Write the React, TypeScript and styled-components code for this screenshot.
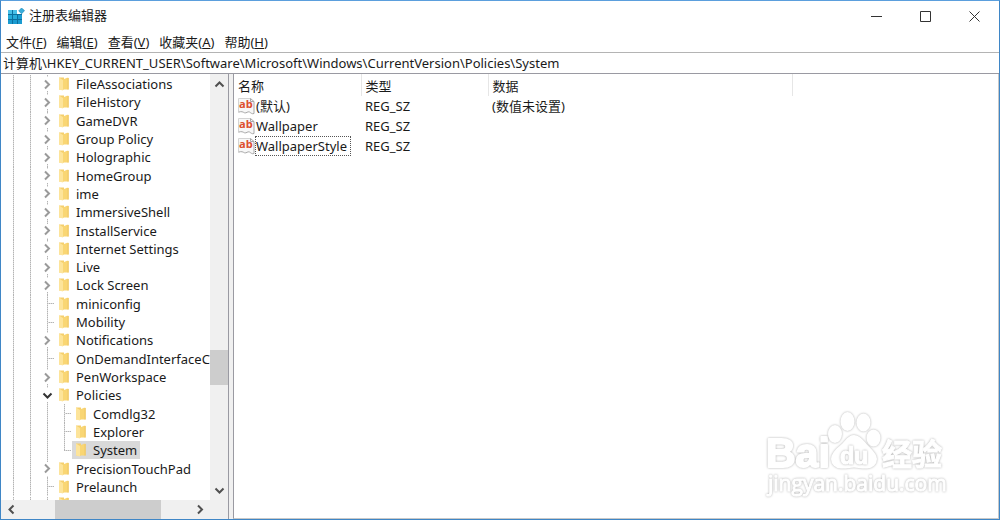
import React from "react";
import styled, { createGlobalStyle, css } from "styled-components";

const GlobalStyle = createGlobalStyle`
  * { box-sizing: border-box; }
  html, body { margin: 0; background: #fff; }
  body, button, input, table {
    font-family: "Noto Sans", "Noto Sans CJK SC", sans-serif;
    font-size: 13px;
    color: #1a1a1a;
  }
  button {
    border: 0;
    padding: 0;
    background: none;
    line-height: inherit;
  }
`;

const Window = styled.div`
  position: relative;
  display: flex;
  flex-direction: column;
  height: 100vh;
  min-height: 320px;
  overflow: hidden;
  background: #fff;
  border: 1px solid #3f86c6;
  border-top-color: #5b9fdd;
`;

const TitleBar = styled.header`
  display: flex;
  align-items: center;
  height: 30px;
  flex: none;
  padding-left: 7px;
`;

const Title = styled.h1`
  margin: 0 auto 0 4px;
  font-size: 13px;
  font-weight: 400;
  line-height: 20px;
  padding-bottom: 2px;
`;

const CaptionButton = styled.button`
  display: grid;
  place-items: center;
  width: 49px;
  height: 30px;
`;

const MenuBar = styled.nav`
  display: flex;
  gap: 10px;
  flex: none;
  height: 21px;
  padding: 1px 0 0 5px;
  line-height: 20px;
`;

const MenuButton = styled.button`
  white-space: nowrap;
`;

const AddressInput = styled.input`
  flex: none;
  width: 100%;
  height: 22px;
  padding: 0 2px 2px;
  border: solid #9a9aa2;
  border-width: 1px 0;
  border-top-color: #b4b4b4;
  border-radius: 0;
  background: #fff;
  outline: 0;
`;

const Panes = styled.main`
  display: grid;
  grid-template-columns: 228px 4px minmax(0, 1fr);
  flex: 1;
  min-height: 0;
  background: #f0f0f0;
`;

const TreePane = styled.section`
  display: grid;
  grid-template-columns: minmax(0, 1fr) 18px;
  grid-template-rows: minmax(0, 1fr) 19px;
  border-right: 1px solid #9a9aa2;
  min-height: 0;
`;

const Tree = styled.ul`
  display: grid;
  grid-template-rows: repeat(23, minmax(0, 1fr)) 4px;
  min-height: 0;
  margin: 0;
  padding: 1px 0 0 3px;
  overflow: hidden;
  list-style: none;
  background: #fff;
`;

const TreeRow = styled.li`
  display: flex;
  min-width: 0;
  min-height: 0;
  line-height: 18px;
`;

const PartialRow = styled(TreeRow)`
  overflow: hidden;
  padding-top: 1px;
`;

const dots = (direction: string) =>
  `repeating-linear-gradient(${direction}, #b4b4b4 0 1px, #dcdcdc 1px 2px)`;

const Guide = styled.span<{ $kind?: "line" | "branch" | "end" }>`
  display: flex;
  align-items: center;
  justify-content: center;
  flex: none;
  width: 17px;
  padding-left: 2px;
  background-repeat: no-repeat;
  background-image: ${dots("to bottom")};
  background-position: 9px 0;
  background-size: 1px 100%;
  ${(p) =>
    (p.$kind === "branch" || p.$kind === "end") &&
    css`
      background-image: ${dots("to bottom")}, ${dots("to right")};
      background-position: 9px 0, 9px 50%;
      background-size: 1px ${p.$kind === "end" ? "50%" : "100%"}, 7px 1px;
    `}
`;

const Expander = styled.button`
  display: grid;
  place-items: center;
  width: 11px;
  height: 14px;
  background: #fff;
`;

const TreeLabel = styled.button<{ $selected?: boolean }>`
  display: flex;
  align-items: center;
  gap: 7px;
  flex: none;
  padding: 0 3px 0 4px;
  white-space: nowrap;
  background: ${(p) => (p.$selected ? "#d9d9d9" : "transparent")};
`;

const FolderClip = styled.span`
  flex: none;
  padding-left: 4px;
  line-height: 0;
`;

const ScrollBar = styled.div<{ $vertical?: boolean }>`
  display: flex;
  flex-direction: ${(p) => (p.$vertical ? "column" : "row")};
  background: #f0f0f0;
  min-width: 0;
  min-height: 0;
`;

const ScrollButton = styled.button`
  display: grid;
  place-items: center;
  flex: 0 0 20px;
`;

const TrackGap = styled.span<{ $size: number }>`
  flex: ${(p) => p.$size} 1 0;
`;

const Thumb = styled(TrackGap)`
  background: #cdcdcd;
`;

const ValuePane = styled.section`
  background: #fff;
  border-left: 1px solid #9a9aa2;
  border-bottom: 1px solid #c8c8c8;
  border-right: 1px solid #c8c8c8;
  min-width: 0;
`;

const ValueTable = styled.table`
  width: 100%;
  table-layout: fixed;
  border-collapse: collapse;
  line-height: 18px;
`;

const Col = styled.col<{ $width?: number }>`
  width: ${(p) => (p.$width ? `${p.$width}px` : "auto")};
`;

const HeadCell = styled.th`
  height: 22px;
  padding: 2px 4px 0;
  font-weight: 400;
  text-align: left;
  border-right: 1px solid #e6e6e6;
  &:last-child { border-right: 0; }
`;

const Cell = styled.td`
  height: 20px;
  padding: 0 4px;
  white-space: nowrap;
`;

const ValueName = styled.button<{ $focused?: boolean }>`
  display: flex;
  align-items: center;
  height: 20px;
  span {
    padding: 0 3px 0 0;
    border: 1px ${(p) => (p.$focused ? "dotted #555" : "solid transparent")};
  }
`;

const Watermark = styled.svg`
  position: absolute;
  right: 48px;
  bottom: 18px;
  width: 188px;
  height: 94px;
  text, ellipse, path {
    filter: drop-shadow(0 0 1px #b0b0b0);
  }
`;

const AppIcon = () => (
  <svg width="17" height="17" viewBox="0 0 17 17" aria-hidden="true">
    <path d="M0 2h9v4h5v10H0z" fill="#1b9bd0" />
    <path d="M0 2h4v4H0zM5 2h4v4H5z" fill="#48bfe8" />
    <path d="M0 7h4v4H0zM5 7h4v4H5z" fill="#27abd9" />
    <path d="M4.500 2v14M9.500 6v10M0 6.500h14M0 11.500h14" stroke="#0b6f9f" strokeWidth="1" />
    <path d="M13.500 0l3 2.600-2.800 3.200-3-2.800z" fill="#3aaedb" stroke="#0c82b5" strokeWidth=".6" />
  </svg>
);

const Folder = () => (
  <svg width="10" height="14" viewBox="0 0 10 14" aria-hidden="true">
    <path d="M0 .5h5v12H0z" fill="#f5cf6c" />
    <path d="M0 .5l4 2.500V13.500L0 12.500z" fill="#fde49a" />
    <path d="M4 2.500L8 .8h1.500v11.700H4z" fill="#f9d674" />
    <path d="M8.500 1h1.200v11.500H8.500z" fill="#efc866" />
  </svg>
);

const Chevron = ({ dir, color }: { dir: "up" | "down" | "left" | "right"; color: string }) => {
  const paths = {
    up: "M1.5 7.5L5.5 3.500l4 4",
    down: "M1.5 3.500l4 4 4-4",
    left: "M7.5 1.5l-4 4 4 4",
    right: "M3 1.500l4 4-4 4",
  };
  return (
    <svg width="11" height="11" viewBox="0 0 11 11" aria-hidden="true">
      <path d={paths[dir]} fill="none" stroke={color} strokeWidth="2" />
    </svg>
  );
};

const StringIcon = () => (
  <svg width="17" height="18" viewBox="0 0 17 18" aria-hidden="true">
    <path
      d="M.5 1.500h12l3.500 3v12c-2 .8-3-.6-4.500-1.500-2-1-3 1.600-5 .8-1.500-.8-3-1.800-6-.6z"
      fill="#f7f7f7"
    />
    <path d="M.5 15.200V1.500h12" fill="none" stroke="#d4d4d4" />
    <path
      d="M12.500 1.500l3.500 3v12c-2 .8-3-.6-4.500-1.500-2-1-3 1.600-5 .8-1.500-.8-3-1.800-6-.6M12.500 1.500v3H16"
      fill="none"
      stroke="#a8a8a8"
    />
    <text x="1" y="11" fontFamily="Open Sans, sans-serif" fontSize="11" fontWeight="700" fill="#dd4f2e">
      ab
    </text>
  </svg>
);

type Node = { name: string; kind: "closed" | "open" | "leaf" | "child" | "lastChild" };

const nodes: Node[] = [
  ...[
    "FileAssociations", "FileHistory", "GameDVR", "Group Policy", "Holographic", "HomeGroup",
    "ime", "ImmersiveShell", "InstallService", "Internet Settings", "Live", "Lock Screen",
  ].map((name): Node => ({ name, kind: "closed" })),
  { name: "miniconfig", kind: "leaf" },
  { name: "Mobility", kind: "leaf" },
  { name: "Notifications", kind: "closed" },
  { name: "OnDemandInterfaceCache", kind: "leaf" },
  { name: "PenWorkspace", kind: "closed" },
  { name: "Policies", kind: "open" },
  { name: "Comdlg32", kind: "child" },
  { name: "Explorer", kind: "child" },
  { name: "System", kind: "lastChild" },
  { name: "PrecisionTouchPad", kind: "closed" },
  { name: "Prelaunch", kind: "leaf" },
];

const menus = [
  ["文件", "F"],
  ["编辑", "E"],
  ["查看", "V"],
  ["收藏夹", "A"],
  ["帮助", "H"],
];

const values = [
  { name: "(默认)", type: "REG_SZ", data: "(数值未设置)" },
  { name: "Wallpaper", type: "REG_SZ", data: "" },
  { name: "WallpaperStyle", type: "REG_SZ", data: "", focused: true },
];

const TreeItem = ({ name, kind }: Node) => {
  const isChild = kind === "child" || kind === "lastChild";
  return (
    <TreeRow>
      <Guide />
      <Guide />
      {(kind === "closed" || kind === "open") && (
        <Guide>
          <Expander aria-label={name} aria-expanded={kind === "open"}>
            <Chevron dir={kind === "open" ? "down" : "right"} color={kind === "open" ? "#333" : "#9a9a9a"} />
          </Expander>
        </Guide>
      )}
      {kind === "leaf" && <Guide $kind="branch" />}
      {isChild && <Guide />}
      {isChild && <Guide $kind={kind === "lastChild" ? "end" : "branch"} />}
      <TreeLabel $selected={name === "System"}>
        <Folder />
        {name}
      </TreeLabel>
    </TreeRow>
  );
};

export default function App() {
  return (
    <>
      <GlobalStyle />
      <Window>
        <TitleBar>
          <AppIcon />
          <Title>注册表编辑器</Title>
          <CaptionButton aria-label="最小化">
            <svg width="11" height="11" stroke="#333"><path d="M0 5.500h11" /></svg>
          </CaptionButton>
          <CaptionButton aria-label="最大化">
            <svg width="11" height="11" stroke="#333" fill="none"><path d="M.5.5h10v10H.5z" /></svg>
          </CaptionButton>
          <CaptionButton aria-label="关闭">
            <svg width="11" height="11" stroke="#333"><path d="M.5.5l10 10M10.500.5l-10 10" /></svg>
          </CaptionButton>
        </TitleBar>
        <MenuBar>
          {menus.map(([label, key]) => (
            <MenuButton key={key}>
              {label}(<u>{key}</u>)
            </MenuButton>
          ))}
        </MenuBar>
        <AddressInput
          aria-label="地址"
          defaultValue={"计算机\\HKEY_CURRENT_USER\\Software\\Microsoft\\Windows\\CurrentVersion\\Policies\\System"}
        />
        <Panes>
          <TreePane>
            <Tree>
              {nodes.map((n) => (
                <TreeItem key={n.name} {...n} />
              ))}
              <PartialRow aria-hidden="true">
                <Guide />
                <Guide />
                <Guide />
                <FolderClip><Folder /></FolderClip>
              </PartialRow>
            </Tree>
            <ScrollBar $vertical>
              <ScrollButton aria-label="向上滚动"><Chevron dir="up" color="#505050" /></ScrollButton>
              <TrackGap $size={255} />
              <Thumb $size={35} />
              <TrackGap $size={95} />
              <ScrollButton aria-label="向下滚动"><Chevron dir="down" color="#505050" /></ScrollButton>
            </ScrollBar>
            <ScrollBar>
              <ScrollButton aria-label="向左滚动"><Chevron dir="left" color="#505050" /></ScrollButton>
              <TrackGap $size={34} />
              <Thumb $size={106} />
              <TrackGap $size={29} />
              <ScrollButton aria-label="向右滚动"><Chevron dir="right" color="#505050" /></ScrollButton>
            </ScrollBar>
          </TreePane>
          <span />
          <ValuePane>
            <ValueTable>
              <colgroup>
                <Col $width={127} />
                <Col $width={127} />
                <Col $width={304} />
                <Col />
              </colgroup>
              <thead>
                <tr>
                  <HeadCell>名称</HeadCell>
                  <HeadCell>类型</HeadCell>
                  <HeadCell>数据</HeadCell>
                  <HeadCell />
                </tr>
              </thead>
              <tbody>
                {values.map((v) => (
                  <tr key={v.name}>
                    <Cell>
                      <ValueName $focused={v.focused}>
                        <StringIcon />
                        <span>{v.name}</span>
                      </ValueName>
                    </Cell>
                    <Cell>{v.type}</Cell>
                    <Cell colSpan={2}>{v.data}</Cell>
                  </tr>
                ))}
              </tbody>
            </ValueTable>
          </ValuePane>
        </Panes>
        <Watermark viewBox="0 0 188 94" fill="#fff" stroke="#fff" strokeWidth="2" strokeLinejoin="round" aria-hidden="true">
          <text x="3" y="60" fontSize="41" fontWeight="700" fontFamily="Liberation Sans, sans-serif">Bai</text>
          <text x="119" y="58" fontSize="30" fontWeight="700" fontFamily="Noto Sans CJK SC, sans-serif" strokeWidth="1">经验</text>
          <ellipse cx="72" cy="27" rx="6" ry="8" />
          <ellipse cx="84.500" cy="14.500" rx="6" ry="8.500" />
          <ellipse cx="100.500" cy="15.500" rx="6" ry="8" />
          <ellipse cx="110.500" cy="31" rx="6" ry="7.500" />
          <path d="M91 29c6 0 9 6 13 10s9 8 9 13-4 8-9 8.500-9-1-13-1-8 1.500-13 1c-5 0-9-4-9-8.500s4-9 9-13 7-10 13-10z" />
          <text x="77" y="57" fontSize="23" fontWeight="700" strokeWidth="1" fontFamily="Liberation Sans, sans-serif">du</text>
          <text x="5" y="84" fontSize="21" strokeWidth="1" fontFamily="Open Sans, sans-serif">jingyan.baidu.com</text>
        </Watermark>
      </Window>
    </>
  );
}
